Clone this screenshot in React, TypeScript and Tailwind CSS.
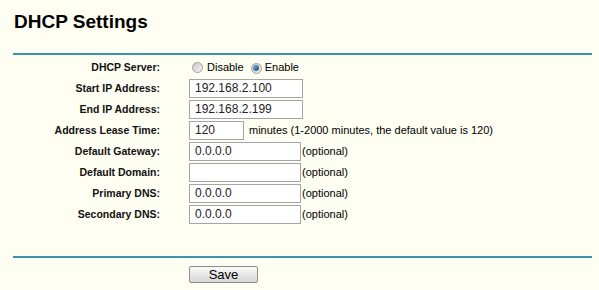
const ROWS = [
  { label: 'Start IP Address:', value: '192.168.2.100', width: 'w-[114px]' },
  { label: 'End IP Address:', value: '192.168.2.199', width: 'w-[114px]' },
];

const OPTIONAL_ROWS = [
  { label: 'Default Gateway:', value: '0.0.0.0' },
  { label: 'Default Domain:', value: '' },
  { label: 'Primary DNS:', value: '0.0.0.0' },
  { label: 'Secondary DNS:', value: '0.0.0.0' },
];

function Radio({ checked }: { checked?: boolean }) {
  return (
    <span className="relative inline-flex h-[11px] w-[11px] items-center justify-center rounded-full border border-[#a0a0a0] bg-gradient-to-br from-[#c8c8c8] to-[#f4f4f4]">
      {checked && (
        <span className="h-[6px] w-[6px] rounded-full bg-gradient-to-br from-[#7db3dc] to-[#1a4a80]" />
      )}
    </span>
  );
}

function Label({ children }: { children: string }) {
  return (
    <div className="w-[160px] text-right text-[10.5px] font-bold leading-[21px] text-[#111]">{children}</div>
  );
}

function TextBox({ value, className }: { value: string; className: string }) {
  return (
    <div className={`h-[19px] ${className} border border-[#a5a5a5] bg-white pl-[5px] text-[12px] leading-[17px] text-[#222]`}>
      {value}
    </div>
  );
}

export default function App() {
  return (
    <div className="h-[290px] w-[599px] bg-[#fefef2] font-['Liberation_Sans',Arial,sans-serif] text-black">
      <h1 className="pl-[14px] pt-[11px] text-[19px] font-bold leading-[22px]">DHCP Settings</h1>

      <div className="ml-[13px] mt-[20px] h-[2px] w-[579px] bg-[#3b93a9]" />

      <div className="pt-[2px]">
        {/* DHCP Server */}
        <div className="flex h-[21px] items-center">
          <Label>DHCP Server:</Label>
          <div className="flex items-center pl-[32px] text-[11px]">
            <Radio />
            <span className="ml-[4px]">Disable</span>
            <span className="ml-[7px]">
              <Radio checked />
            </span>
            <span className="ml-[3px]">Enable</span>
          </div>
        </div>

        {ROWS.map((r) => (
          <div key={r.label} className="flex h-[21px] items-center">
            <Label>{r.label}</Label>
            <div className="pl-[29px]">
              <TextBox value={r.value} className={r.width} />
            </div>
          </div>
        ))}

        {/* Lease time */}
        <div className="flex h-[21px] items-center">
          <Label>Address Lease Time:</Label>
          <div className="flex items-center pl-[29px]">
            <TextBox value="120" className="w-[55px]" />
            <span className="ml-[5px] text-[11px]">minutes (1-2000 minutes, the default value is 120)</span>
          </div>
        </div>

        {OPTIONAL_ROWS.map((r) => (
          <div key={r.label} className="flex h-[21px] items-center">
            <Label>{r.label}</Label>
            <div className="flex items-center pl-[29px]">
              <TextBox value={r.value} className="w-[112px]" />
              <span className="ml-[1px] text-[11px]">(optional)</span>
            </div>
          </div>
        ))}
      </div>

      <div className="ml-[13px] mt-[31px] h-[2px] w-[579px] bg-[#3b93a9]" />

      <div className="pl-[189px] pt-[4px]">
        <button className="h-[17px] w-[69px] rounded-[2px] border border-[#8e8e8e] bg-gradient-to-b from-[#fafafa] to-[#d6d6d6] text-[13px] leading-[15px] text-black">
          Save
        </button>
      </div>
    </div>
  );
}
